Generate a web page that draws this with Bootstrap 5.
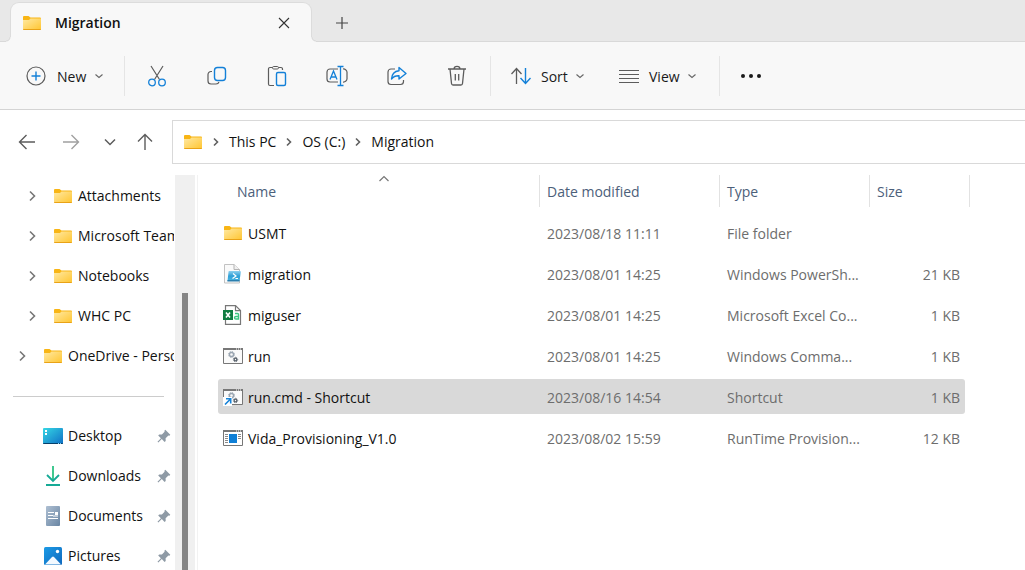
<!DOCTYPE html>
<html lang="en">
<head>
<meta charset="utf-8">
<meta name="viewport" content="width=device-width, initial-scale=1">
<title>Migration - File Explorer</title>
<link href="https://cdn.jsdelivr.net/npm/bootstrap@5.3.0/dist/css/bootstrap.min.css" rel="stylesheet">
<style>
  body { font-family: "Open Sans", "Noto Sans", sans-serif; font-size: 14px; line-height: 20px; color: #111; background: #fff; }
  svg { display: block; flex: none; fill: none; }
  button { font-size: 14px; color: #1a1a1a; background: none; border: 0; padding: 0; }
  a { color: inherit; text-decoration: none; }
  .tab-strip { height: 42px; background: #e8e8e8; box-shadow: inset 0 -1px #d9d9d9; padding: 2px 0 0 10px; }
  .window-tab { position: relative; width: 302px; background: #f8f8f8; border: 1px solid #dcdcdc; border-bottom: 0; border-radius: 9px 9px 0 0; padding: 0 21px 0 11px; }
  .window-tab::before, .window-tab::after { content: ""; position: absolute; bottom: 0; width: 5px; height: 5px; }
  .window-tab::before { right: 100%; background: radial-gradient(circle at 0 0, #e8e8e8 3px, #d9d9d9 4px, #f8f8f8 5px); }
  .window-tab::after { left: 100%; background: radial-gradient(circle at 100% 0, #e8e8e8 3px, #d9d9d9 4px, #f8f8f8 5px); }
  .tab-title { font-weight: 600; margin-left: 13px; padding-top: 1px; }
  .new-tab { margin-left: 18px; width: 24px; padding-top: 2px; }
  .tool-bar { height: 68px; background: #f8f8f8; border-bottom: 1px solid #d4d4d4; color: #5c5c5c; }
  .tool-bar > button, .icon-tools button { padding-top: 1px; }
  .tool-sep { width: 1px; height: 40px; background: #e5e5e5; }
  .btn-new { width: 124px; padding-left: 26px; gap: 11px; }
  .icon-tools { gap: 12px; padding: 0 9px 0 8px; }
  .icon-tools button { width: 48px; height: 40px; }
  .btn-menu { gap: 10px; }
  .btn-sort { width: 128px; padding-left: 20px; }
  .btn-view { width: 100px; }
  .btn-new span, .btn-menu span { padding-top: 1px; }
  .chev { color: #666; margin-left: -3px; }
  .address-row { padding: 10px 0 11px; }
  .nav-arrows { width: 172px; padding-left: 16px; gap: 22px; }
  .nav-arrows .group-end { gap: 16px; }
  .address-box { height: 44px; border: 1px solid #d9d9d9; border-right: 0; padding-left: 10px; gap: 10px; color: #606060; }
  .address-box a { color: #111; }
  .side-pane { width: 174px; margin-right: 1px; padding-top: 1px; }
  .side-pane li { height: 40px; padding-left: 26px; gap: 5px; white-space: nowrap; }
  .side-pane li.outer { padding-left: 16px; }
  .side-pane li.pinned { padding-left: 43px; }
  .side-pane li > button { width: 12px; margin-right: 10px; color: #777; }
  .side-pane .pin { margin-left: auto; margin-right: 3px; }
  .side-pane hr { width: 151px; margin: 0 0 0 13px; border-color: #ccc; opacity: 1; }
  .side-pane li.divider { padding: 0; }
  .scroll-track { width: 20px; background: #f0f0f0; padding: 118px 7px 0; }
  .scroll-thumb { width: 6px; background: #858585; }
  .file-pane { margin-left: 2px; border-left: 1px solid #f2f2f2; padding-left: 20px; overflow: hidden; }
  .file-list { table-layout: fixed; width: 747px; border-collapse: separate; border-spacing: 0 6px; margin-top: -6px; color: #6d6d6d; }
  .file-list th { height: 34px; padding: 0; font-weight: 400; color: #4c607a; vertical-align: top; }
  .file-list th div { position: relative; height: 32px; line-height: 34px; border-right: 1px solid #e2e2e2; padding-left: 7px; }
  .file-list th:first-child div { padding-left: 19px; }
  .file-list th:last-child div { margin-right: -5px; }
  .file-list td { height: 35px; padding: 2px 7px 0; white-space: nowrap; }
  .file-list td:first-child { padding: 0 0 0 5px; border-radius: 3px 0 0 3px; color: #111; }
  .file-list td:last-child { padding-right: 5px; border-radius: 0 3px 3px 0; text-align: right; }
  .file-list .selected td { background: #d9d9d9; }
  .file-label { gap: 5px; }
  .file-label span { padding-top: 2px; }
  .col-name { width: 322px; } .col-date { width: 180px; } .col-type { width: 150px; }
  .sort-mark { position: absolute; left: 160px; top: 0; }
</style>
</head>
<body>
<svg width="0" height="0" class="position-absolute" aria-hidden="true">
  <defs>
    <linearGradient id="gFolder" x1="0" y1="0" x2="1" y2="1"><stop offset="0" stop-color="#ffe9a3"/><stop offset="1" stop-color="#ffc530"/></linearGradient>
    <linearGradient id="gDesk" x1="0" y1="0" x2="1" y2="1"><stop offset="0" stop-color="#35d7e4"/><stop offset="1" stop-color="#1070c6"/></linearGradient>
    <linearGradient id="gDoc" x1="0" y1="0" x2="1" y2="1"><stop offset="0" stop-color="#aebfd2"/><stop offset="1" stop-color="#6985a3"/></linearGradient>
    <linearGradient id="gPic" x1="0" y1="0" x2="1" y2="1"><stop offset="0" stop-color="#1c9be6"/><stop offset="1" stop-color="#0f68bd"/></linearGradient>
    <linearGradient id="gPs" x1="0" y1="0" x2="0" y2="1"><stop offset="0" stop-color="#8fd0ee"/><stop offset=".5" stop-color="#2f9fd6"/><stop offset="1" stop-color="#49b6e2"/></linearGradient>
    <symbol id="folder" viewBox="0 0 20 16"><path fill="#f8b515" d="M1 2a1 1 0 0 1 1-1h4.500l2 1.500H18a1 1 0 0 1 1 1v3H1z"/><path fill="url(#gFolder)" d="M1 5h6l1.500-1.500H19V14a1 1 0 0 1-1 1H2a1 1 0 0 1-1-1z"/><path fill="#e9a216" d="M1 14h18a1 1 0 0 1-1 1H2a1 1 0 0 1-1-1z"/></symbol>
    <symbol id="right" viewBox="0 0 12 12"><path fill="none" stroke="currentColor" stroke-width="1.600" d="m4 1.500 4.500 4.500L4 10.500"/></symbol>
    <symbol id="crumb" viewBox="0 0 6 10"><path fill="none" stroke="currentColor" stroke-width="1.600" d="m1 1.500 3.500 3.500L1 8.500"/></symbol>
    <symbol id="down" viewBox="0 0 10 10"><path fill="none" stroke="currentColor" stroke-width="1.100" d="m1.500 3.500 3.500 3 3.500-3"/></symbol>
    <symbol id="pin" viewBox="0 0 14 14"><path fill="#8e9aa5" d="m8.300.700 5 5-.900 1-1-.200-2.800 2.700.1 2.700-1.100 1-2.800-2.800L1.300 13.500.500 12.700 3.900 9.200 1.200 6.500l1-1.100 2.700.1L7.600 2.700l-.200-1z"/></symbol>
    <symbol id="gears" viewBox="0 0 20 16"><path fill="#fafafa" stroke="#777" d="M.5.500h19v15H.5z"/><path fill="#777" d="M0 0h20v2H0z"/><path stroke="#fff" stroke-dasharray="1 1" d="M13 1h6"/><circle cx="8.500" cy="6.500" r="2" stroke="#9aa5b1" stroke-width="1.300" fill="none"/><circle cx="8.500" cy="6.500" r="3" stroke="#9aa5b1" stroke-dasharray="1.200 1.150" fill="none"/><circle cx="12.500" cy="11.500" r="1.300" stroke="#5b646e" stroke-width="1.200" fill="none"/><circle cx="12.500" cy="11.500" r="2.200" stroke="#5b646e" stroke-dasharray=".9 .83" fill="none"/></symbol>
  </defs>
</svg>

<div class="d-flex flex-column vh-100 overflow-hidden">
  <header class="tab-strip d-flex flex-shrink-0">
    <div class="window-tab d-flex align-items-center">
      <svg width="20" height="16"><use href="#folder"/></svg>
      <span class="tab-title">Migration</span>
      <button class="ms-auto" aria-label="Close tab"><svg width="12" height="12" viewBox="0 0 12 12"><path stroke="#333" stroke-width="1.100" d="m1 1 10 10M11 1 1 11"/></svg></button>
    </div>
    <button class="new-tab d-flex align-items-center justify-content-center" aria-label="New tab"><svg width="12" height="12" viewBox="0 0 12 12"><path stroke="#444" stroke-width="1.200" d="M6 0v12M0 6h12"/></svg></button>
  </header>

  <div class="tool-bar d-flex align-items-center flex-shrink-0" role="toolbar">
    <button class="btn-new d-flex align-items-center">
      <svg width="20" height="20" viewBox="0 0 20 20"><circle cx="10" cy="10" r="9" stroke="#5c5c5c" stroke-width="1.200"/><path stroke="#1380d8" stroke-width="1.400" d="M10 5.500v9M5.500 10h9"/></svg>
      <span>New</span><svg class="chev" width="10" height="10"><use href="#down"/></svg>
    </button>
    <span class="tool-sep"></span>
    <div class="icon-tools d-flex">
      <button class="d-flex align-items-center justify-content-center" aria-label="Cut"><svg width="20" height="22" viewBox="0 0 20 22"><path stroke="#5c5c5c" stroke-width="1.200" d="m4 1 8.500 13.500M16 1 7.500 14.500"/><circle cx="5" cy="17.500" r="3.300" stroke="#1380d8" stroke-width="1.300"/><circle cx="15" cy="17.500" r="3.300" stroke="#1380d8" stroke-width="1.300"/></svg></button>
      <button class="d-flex align-items-center justify-content-center" aria-label="Copy"><svg width="20" height="20" viewBox="0 0 20 20"><path stroke="#5c5c5c" stroke-width="1.200" d="M5 5.500H4a3 3 0 0 0-3 3V15a3 3 0 0 0 3 3h5c1.600 0 2.500-.600 3-2"/><rect x="7.500" y="1.500" width="11" height="13" rx="3" stroke="#1380d8" stroke-width="1.400"/></svg></button>
      <button class="d-flex align-items-center justify-content-center" aria-label="Paste"><svg width="20" height="22" viewBox="0 0 20 22"><path stroke="#5c5c5c" stroke-width="1.200" d="M7 20.500H3a1.500 1.500 0 0 1-1.500-1.500V4A1.500 1.500 0 0 1 3 2.500h2.500m6 0H14A1.500 1.500 0 0 1 15.500 4v1"/><rect x="5.500" y="1.500" width="6" height="2.500" rx="1.200" stroke="#5c5c5c"/><rect x="9.500" y="7.500" width="9" height="13" rx="1.500" stroke="#1380d8" stroke-width="1.400"/></svg></button>
      <button class="d-flex align-items-center justify-content-center" aria-label="Rename"><svg width="22" height="22" viewBox="0 0 22 22"><path stroke="#5c5c5c" stroke-width="1.200" d="M12 4H4a3 3 0 0 0-3 3v7a3 3 0 0 0 3 3h8M17 4a3.500 3.500 0 0 1 4 3v7a3.500 3.500 0 0 1-4 3"/><path stroke="#1380d8" stroke-width="1.300" d="m4 14.500 3.500-8.500 3.500 8.500M5 12h5M14.500 1.500v19M11.500 1.500h6M11.500 20.500h6"/></svg></button>
      <button class="d-flex align-items-center justify-content-center" aria-label="Share"><svg width="20" height="20" viewBox="0 0 20 20"><path stroke="#5c5c5c" stroke-width="1.200" d="M8 3H4a3 3 0 0 0-3 3v9.500a3 3 0 0 0 3 3h9.500a3 3 0 0 0 3-3V14"/><path stroke="#1380d8" stroke-width="1.400" stroke-linejoin="round" d="M12 1.500 19 7.500l-7 5.500V9.800c-3.500-.200-5.600.800-7.500 3.200.3-4.600 2.800-7.800 7.500-8.300z"/></svg></button>
      <button class="d-flex align-items-center justify-content-center" aria-label="Delete"><svg width="20" height="22" viewBox="0 0 20 22"><path stroke="#5c5c5c" stroke-width="1.300" d="M1 4h18M3 4l1.500 14.500c.1 1 .8 1.500 1.500 1.500h8c.7 0 1.400-.500 1.500-1.500L17 4M7 4c.2-3.400 5.800-3.400 6 0M8.300 9v6.500M11.700 9v6.500"/></svg></button>
    </div>
    <span class="tool-sep"></span>
    <button class="btn-menu btn-sort d-flex align-items-center">
      <svg width="20" height="18" viewBox="0 0 20 18"><path stroke="#5c5c5c" stroke-width="1.300" d="M5.500 17V2M.5 7l5-5.500 5 5.500"/><path stroke="#1380d8" stroke-width="1.400" d="M14.500 1v15M9.500 11l5 5.500 5-5.500"/></svg>
      <span>Sort</span><svg class="chev" width="10" height="10"><use href="#down"/></svg>
    </button>
    <button class="btn-menu btn-view d-flex align-items-center">
      <svg width="20" height="14" viewBox="0 0 20 14"><path stroke="#5c5c5c" d="M0 1.500h20M0 5.500h20M0 9.500h20M0 13.500h20"/></svg>
      <span>View</span><svg class="chev" width="10" height="10"><use href="#down"/></svg>
    </button>
    <span class="tool-sep"></span>
    <button class="ms-3 px-1" aria-label="See more"><svg width="22" height="6" viewBox="0 0 22 6"><g fill="#1a1a1a"><circle cx="3" cy="3" r="2"/><circle cx="11" cy="3" r="2"/><circle cx="19" cy="3" r="2"/></g></svg></button>
  </div>

  <div class="address-row d-flex flex-shrink-0">
    <div class="nav-arrows d-flex align-items-center">
      <button aria-label="Back"><svg width="22" height="18" viewBox="0 0 22 18"><path stroke="#5c5c5c" stroke-width="1.400" d="M19 9H4M10.500 2 3.500 9l7 7"/></svg></button>
      <button aria-label="Forward"><svg width="22" height="18" viewBox="0 0 22 18"><path stroke="#a0a0a0" stroke-width="1.400" d="M3 9h15M11.500 2l7 7-7 7"/></svg></button>
      <div class="group-end d-flex align-items-center">
        <button aria-label="Recent locations"><svg width="12" height="8" viewBox="0 0 12 8"><path stroke="#5c5c5c" stroke-width="1.500" d="m1 1.500 5 5 5-5"/></svg></button>
        <button class="ms-1" aria-label="Up"><svg width="18" height="18" viewBox="0 0 18 18"><path stroke="#5c5c5c" stroke-width="1.400" d="M9 17V2M2 8.500l7-7 7 7"/></svg></button>
      </div>
    </div>
    <nav class="address-box d-flex align-items-center flex-grow-1" aria-label="Location">
      <svg width="20" height="16"><use href="#folder"/></svg>
      <svg width="6" height="10"><use href="#crumb"/></svg><a href="#">This PC</a>
      <svg width="6" height="10"><use href="#crumb"/></svg><a href="#">OS (C:)</a>
      <svg width="6" height="10"><use href="#crumb"/></svg><a href="#">Migration</a>
    </nav>
  </div>

  <main class="d-flex flex-grow-1 overflow-hidden">
    <nav class="side-pane flex-shrink-0 overflow-hidden" aria-label="Folders">
      <ul class="list-unstyled m-0">
        <li class="d-flex align-items-center"><button aria-label="Expand Attachments"><svg width="12" height="12"><use href="#right"/></svg></button><svg width="20" height="16"><use href="#folder"/></svg><a href="#">Attachments</a></li>
        <li class="d-flex align-items-center"><button aria-label="Expand Microsoft Teams"><svg width="12" height="12"><use href="#right"/></svg></button><svg width="20" height="16"><use href="#folder"/></svg><a href="#">Microsoft Team</a></li>
        <li class="d-flex align-items-center"><button aria-label="Expand Notebooks"><svg width="12" height="12"><use href="#right"/></svg></button><svg width="20" height="16"><use href="#folder"/></svg><a href="#">Notebooks</a></li>
        <li class="d-flex align-items-center"><button aria-label="Expand WHC PC"><svg width="12" height="12"><use href="#right"/></svg></button><svg width="20" height="16"><use href="#folder"/></svg><a href="#">WHC PC</a></li>
        <li class="outer d-flex align-items-center"><button aria-label="Expand OneDrive"><svg width="12" height="12"><use href="#right"/></svg></button><svg width="20" height="16"><use href="#folder"/></svg><a href="#">OneDrive - Perso</a></li>
        <li class="divider d-flex align-items-center"><hr></li>
        <li class="pinned d-flex align-items-center"><svg width="20" height="16" viewBox="0 0 20 16"><rect width="20" height="16" rx="1" fill="url(#gDesk)"/><path fill="#063f69" d="M0 15h20a1 1 0 0 1-1 1H1a1 1 0 0 1-1-1z"/><path fill="#fff" d="M2 2h2v2H2zM2 5h2v2H2z"/><path stroke="#7fd1f2" stroke-dasharray="1 1" d="M15 15.500h4"/></svg><a href="#">Desktop</a><svg class="pin" width="14" height="14"><use href="#pin"/></svg></li>
        <li class="pinned d-flex align-items-center"><svg width="20" height="20" viewBox="0 0 20 20"><path stroke="#2cc284" stroke-width="1.800" d="M10 0v14"/><path stroke="#16aa96" stroke-width="1.800" d="m4 9 6 6 6-6M3 19h14"/></svg><a href="#">Downloads</a><svg class="pin" width="14" height="14"><use href="#pin"/></svg></li>
        <li class="pinned d-flex align-items-center"><svg width="20" height="20" viewBox="0 0 20 20"><rect x="3" width="14" height="20" rx="1" fill="url(#gDoc)"/><path stroke="#fff" stroke-width="1.200" d="M5 6.500h6M5 9.500h5M5 12.500h10M10 10h5"/><path fill="#fff" d="M12 6h3v3h-3z"/></svg><a href="#">Documents</a><svg class="pin" width="14" height="14"><use href="#pin"/></svg></li>
        <li class="pinned d-flex align-items-center"><svg width="20" height="18" viewBox="0 0 20 18"><rect x="1" width="18" height="18" rx="1.500" fill="url(#gPic)"/><path fill="#f3f9ff" d="m2 17.500 7-7.500q1-.800 2 0l7 7.500z"/><circle cx="14.500" cy="4.500" r="1.700" fill="#fff"/></svg><a href="#">Pictures</a><svg class="pin" width="14" height="14"><use href="#pin"/></svg></li>
      </ul>
    </nav>
    <div class="scroll-track d-flex flex-shrink-0"><div class="scroll-thumb"></div></div>

    <section class="file-pane flex-grow-1">
      <table class="file-list">
        <colgroup><col class="col-name"><col class="col-date"><col class="col-type"><col></colgroup>
        <thead><tr>
          <th scope="col"><div>Name<svg class="sort-mark" width="12" height="8" viewBox="0 0 12 8"><path stroke="#777" stroke-width="1.200" d="m1.500 6 4.500-4.500L10.500 6"/></svg></div></th>
          <th scope="col"><div>Date modified</div></th><th scope="col"><div>Type</div></th><th scope="col"><div>Size</div></th>
        </tr></thead>
        <tbody>
          <tr><td><div class="file-label d-flex align-items-center"><svg width="20" height="16"><use href="#folder"/></svg><span>USMT</span></div></td><td>2023/08/18 11:11</td><td>File folder</td><td></td></tr>
          <tr><td><div class="file-label d-flex align-items-center"><svg width="20" height="20" viewBox="0 0 20 20"><path fill="#fafafa" stroke="#c2c2c2" d="M1.500.500h9.500l5.500 5v13.500h-15z"/><path fill="#f0f0f0" stroke="#b5b5b5" d="M11 .5v5h5.500"/><path fill="url(#gPs)" d="M6 7h11q1 0 .8 1l-1.300 9H4.500L5.500 8q0-1 .5-1z"/><path fill="#2b7fae" d="M4.500 16h12l-.1 1.500H4.400z"/><path stroke="#fff" stroke-width="1.200" d="m10 9.500 3 2.500-3.500 2.500M12.500 14.500H15"/></svg><span>migration</span></div></td><td>2023/08/01 14:25</td><td>Windows PowerSh...</td><td>21 KB</td></tr>
          <tr><td><div class="file-label d-flex align-items-center"><svg width="20" height="20" viewBox="0 0 20 20"><path fill="#fff" stroke="#777" stroke-width="1.200" d="M2.500.600h10l5 5v13.800h-15z"/><path stroke="#777" stroke-width="1.200" d="M12.500.600v5h5"/><rect y="5" width="10" height="10" fill="#107c41"/><path stroke="#fff" stroke-width="1.600" d="m3 7.500 4 5M7 7.500l-4 5"/><path stroke="#3cc581" stroke-width="1.400" d="M12 8.500h2.500q1 0 1 1V14H13q-1.500 0-1.500-1.200t1.500-1.300h2.500"/></svg><span>miguser</span></div></td><td>2023/08/01 14:25</td><td>Microsoft Excel Co...</td><td>1 KB</td></tr>
          <tr><td><div class="file-label d-flex align-items-center"><svg width="20" height="16"><use href="#gears"/></svg><span>run</span></div></td><td>2023/08/01 14:25</td><td>Windows Comma...</td><td>1 KB</td></tr>
          <tr class="selected" aria-selected="true"><td><div class="file-label d-flex align-items-center"><svg width="20" height="18" viewBox="0 0 20 18"><use href="#gears" width="20" height="16" y="1"/><path fill="#fff" d="M0 9h9v9H0z"/><path stroke="#1683d8" stroke-width="1.600" d="m2 16.500 5.500-5.500M3 10.800h4.700v4.700"/></svg><span>run.cmd - Shortcut</span></div></td><td>2023/08/16 14:54</td><td>Shortcut</td><td>1 KB</td></tr>
          <tr><td><div class="file-label d-flex align-items-center"><svg width="20" height="16" viewBox="0 0 20 16"><path fill="#fff" stroke="#777" d="M.5.500h19v15H.5z"/><path fill="#777" d="M0 0h20v2H0z"/><path stroke="#fff" stroke-dasharray="1 1" d="M13 1h6"/><path fill="#0f7fd6" d="M6 4h8v9H6z"/><path stroke="#8a8a8a" d="M2 4.500h3M2 6.500h3M2 8.500h3M2 10.500h3M2 12.500h3M15 4.500h3M15 6.500h3M15 8.500h3"/></svg><span>Vida_Provisioning_V1.0</span></div></td><td>2023/08/02 15:59</td><td>RunTime Provision...</td><td>12 KB</td></tr>
        </tbody>
      </table>
    </section>
  </main>
</div>
<script src="https://cdn.jsdelivr.net/npm/bootstrap@5.3.0/dist/js/bootstrap.bundle.min.js"></script>
</body>
</html>
